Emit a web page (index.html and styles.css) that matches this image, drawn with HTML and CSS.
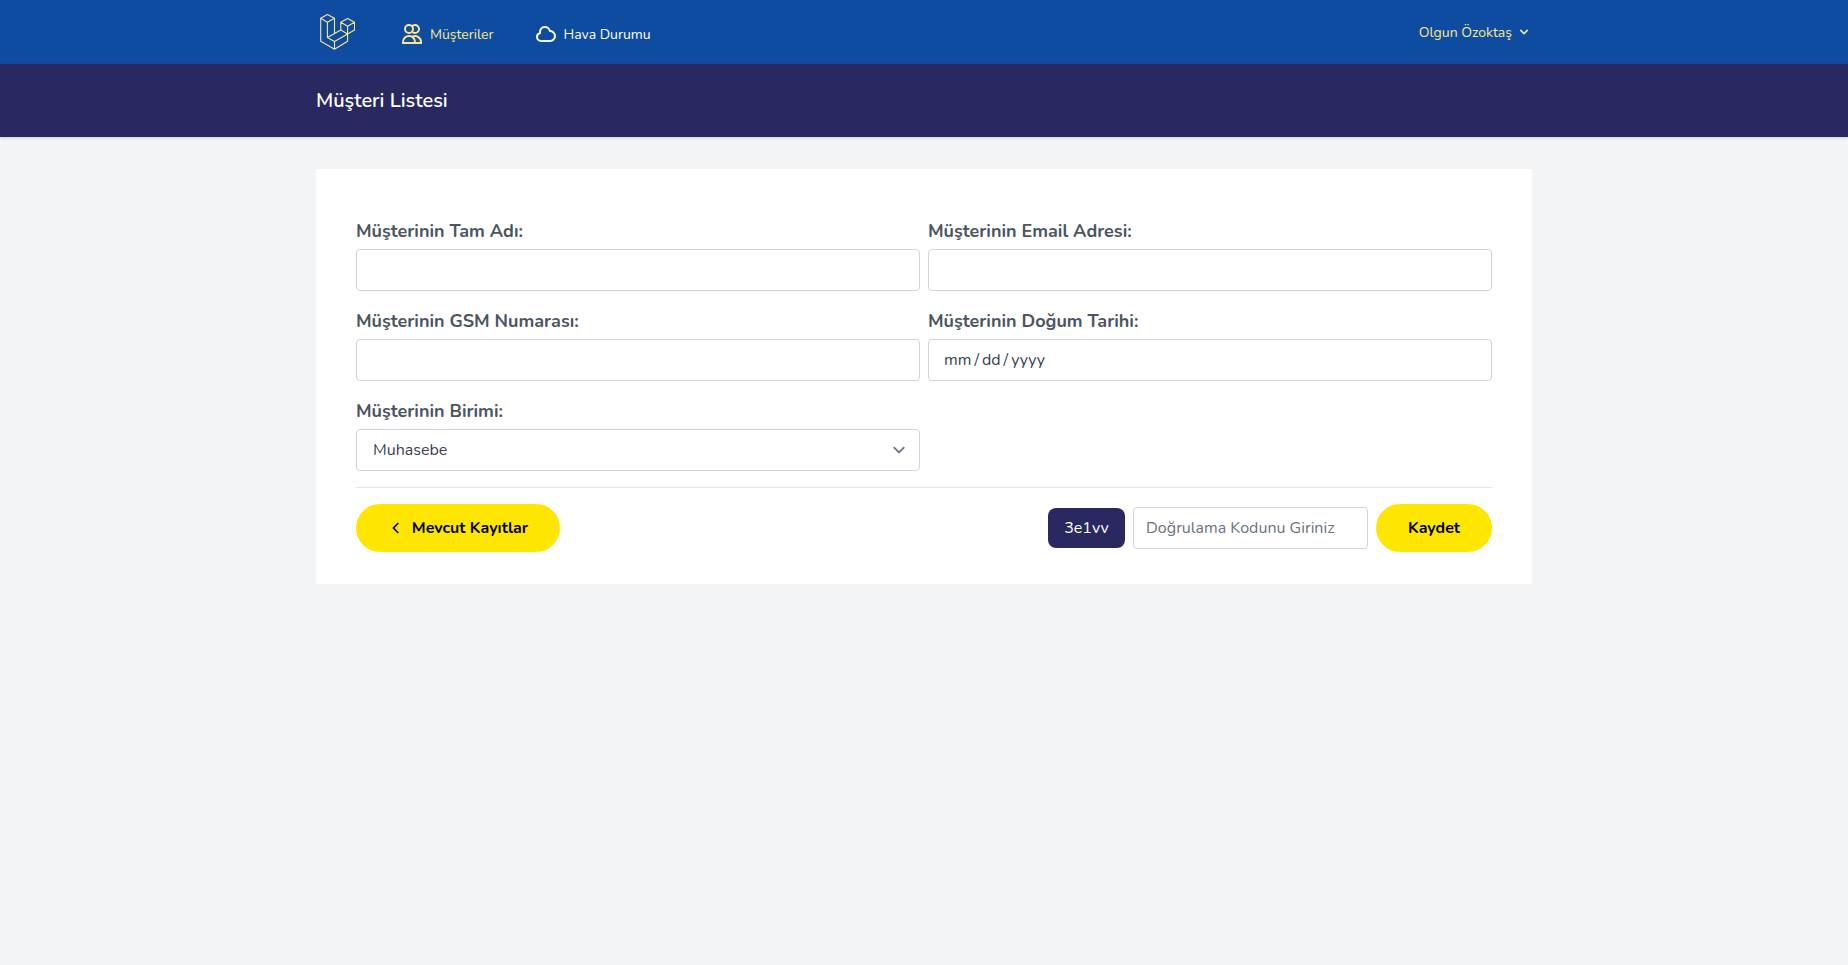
FILE: index.html
```html
<!DOCTYPE html>
<html lang="tr">
<head>
<meta charset="utf-8">
<title>Müşteri Listesi</title>
<link rel="stylesheet" href="styles.css">
</head>
<body>
<nav class="nav">
  <div class="container nav-inner">
    <a class="logo" href="#"><svg width="36" height="38" viewBox="319 13 36 38" fill="none" stroke="currentColor" stroke-width="1.1" stroke-linejoin="round"><path d="M327.4 14.4 320.7 18.3V41.3L334.5 49.3 347.6 41.3V34L354.5 30V22.3L347.6 18.4 340.8 22.3V30L327.4 37.6V22.3L320.7 18.3M327.4 14.4 334.5 18.3V33.6M327.4 22.3 334.5 18.3M327.4 37.6 334.5 41.5 347.6 34 340.8 30M334.5 41.5V49.3M340.8 22.3 347.6 26.2 354.5 22.3M347.6 26.2V34"/></svg></a>
    <a class="link link-customers active" href="#"><svg width="24" height="24" viewBox="0 0 24 24" fill="none" stroke="currentColor" stroke-width="2" stroke-linecap="round" stroke-linejoin="miter"><path d="M12 4.354a4 4 0 110 5.292M15 21H3v-1a6 6 0 0112 0v1zm0 0h6v-1a6 6 0 00-9-5.197M13 7a4 4 0 11-8 0 4 4 0 018 0z"/></svg><span>Müşteriler</span></a>
    <a class="link link-weather" href="#"><svg width="24" height="24" viewBox="0 0 24 24" fill="none" stroke="currentColor" stroke-width="2" stroke-linecap="round" stroke-linejoin="round"><path d="M3 15a4 4 0 004 4h9a5 5 0 10-.1-9.999 5.002 5.002 0 10-9.78 2.096A4.001 4.001 0 003 15z"/></svg><span>Hava Durumu</span></a>
    <a class="user" href="#"><span>Olgun Özoktaş</span><svg width="16" height="16" viewBox="0 0 20 20" fill="currentColor"><path fill-rule="evenodd" clip-rule="evenodd" d="M5.293 7.293a1 1 0 011.414 0L10 10.586l3.293-3.293a1 1 0 111.414 1.414l-4 4a1 1 0 01-1.414 0l-4-4a1 1 0 010-1.414z"/></svg></a>
  </div>
</nav>
<header class="page-head"><div class="container"><h1>Müşteri Listesi</h1></div></header>
<main class="container">
  <form class="card">
    <div class="fields">
      <label class="field"><span class="caption">Müşterinin Tam Adı:</span><input class="control" type="text"></label>
      <label class="field"><span class="caption">Müşterinin Email Adresi:</span><input class="control" type="text"></label>
      <label class="field"><span class="caption">Müşterinin GSM Numarası:</span><input class="control" type="text"></label>
      <label class="field"><span class="caption">Müşterinin Doğum Tarihi:</span><span class="control date"><span>mm</span><span>/</span><span>dd</span><span>/</span><span>yyyy</span></span></label>
      <label class="field"><span class="caption">Müşterinin Birimi:</span><span class="control select"><span>Muhasebe</span><svg width="24" height="24" viewBox="0 0 20 20" fill="none" stroke="#6b7280" stroke-width="1.5" stroke-linecap="round" stroke-linejoin="round"><path d="M6 8l4 4 4-4"/></svg></span></label>
    </div>
    <div class="actions">
      <a class="btn back" href="#"><svg width="8" height="12" viewBox="0 0 8 12" fill="none" stroke="currentColor" stroke-width="1.7"><path d="M6.3 1 1.5 6l4.8 5"/></svg><span>Mevcut Kayıtlar</span></a>
      <span class="code">3e1vv</span>
      <input class="control verify" type="text" placeholder="Doğrulama Kodunu Giriniz">
      <button class="btn save" type="button">Kaydet</button>
    </div>
  </form>
</main>
</body>
</html>
```

FILE: styles.css
```css
*{box-sizing:border-box}
body{margin:0;background:#f3f4f6;font-family:Nunito,Lato,sans-serif;font-size:16px;line-height:24px;color:#374151}
a{color:inherit;text-decoration:none}
svg{display:block;flex:none}
.container{width:1216px;margin:0 auto}
.nav{height:64px;background:#0d4ca0;color:#fff;font-size:14px;border-bottom:1px solid #17479a}
.nav-inner{display:flex;align-items:center;height:64px}
.logo{color:#fde68a;margin-left:3px}
.link{display:flex;align-items:center;gap:6px;padding-top:4px}
.link span,.user span{padding-top:2px}
.active,.user{color:#fde68a}
.link-customers{margin-left:45px}
.link-weather{margin-left:40px}
.user{display:flex;align-items:center;gap:4px;margin-left:auto}
.page-head{height:73px;background:#2a2860;color:#fff;box-shadow:0 1px 3px rgba(0,0,0,.1),0 1px 2px rgba(0,0,0,.06)}
h1{margin:0;padding-top:24px;font-size:20px;font-weight:600;line-height:25px}
.card{margin-top:32px;height:415px;padding:48px 40px 0;background:#fff}
.fields{display:grid;grid-template-columns:1fr 1fr;gap:16px 8px;padding-bottom:16px;border-bottom:1px solid #e5e7eb}
.field{display:flex;flex-direction:column;align-items:flex-start;gap:4px}
.caption{font-size:18px;line-height:28px;font-weight:700;color:#4b5563}
.control{display:flex;align-items:center;width:100%;height:42px;border:1px solid #d1d5db;border-radius:4px;background:#fff;padding:0 16px;font:inherit;color:inherit}
.date{gap:3px;padding-left:15px}
.select{justify-content:space-between;padding-right:8px}
.actions{display:flex;align-items:center;gap:8px;padding-top:16px}
.btn{display:flex;align-items:center;justify-content:center;height:48px;border:0;border-radius:24px;background:#ffe600;color:#000;font:700 16px/24px Nunito,Lato,sans-serif}
.back{width:204px;gap:12px;padding-left:4px;margin-right:auto}
.save{width:116px}
.code{display:flex;align-items:center;justify-content:center;width:77px;height:40px;border-radius:8px;background:#2a2860;color:#fff}
.verify{width:235px;padding:0 12px}
.verify::placeholder{color:#6b7280;opacity:1}
```
